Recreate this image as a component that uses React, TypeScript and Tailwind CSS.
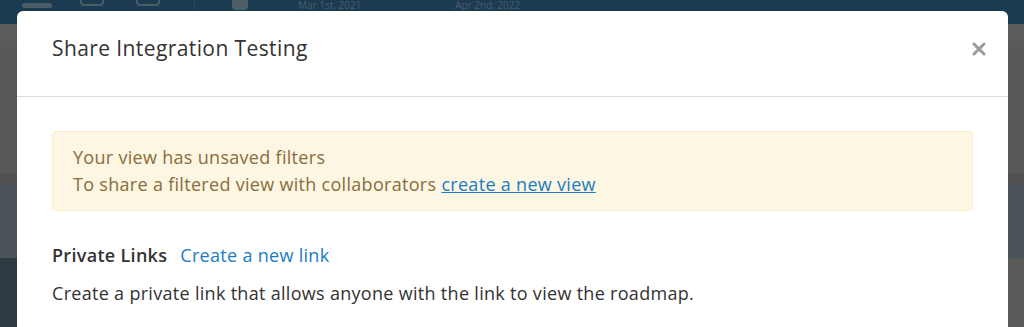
import { FC } from "react";

const font = { fontFamily: "'Open Sans', 'Noto Sans', sans-serif" };

const Backdrop: FC = () => (
  <div className="absolute inset-0 flex flex-col">
    <div className="relative h-[24px] bg-[#1b3b51] overflow-hidden">
      <div className="absolute left-[22px] top-[3px] h-[5px] w-[30px] rounded-sm bg-[#4d5d68]" />
      <div className="absolute left-[80px] -top-[6px] h-[12px] w-[24px] rounded-sm border-2 border-[#4d5d68]" />
      <div className="absolute left-[136px] -top-[6px] h-[12px] w-[24px] rounded-sm border-2 border-[#4d5d68]" />
      <div className="absolute left-[194px] top-0 h-[24px] w-px bg-[#2c4b60]" />
      <div className="absolute left-[232px] -top-[4px] h-[14px] w-[16px] rounded-sm bg-[#4d5d68]" />
      <span className="absolute left-[298px] top-0 text-[10px] leading-[10px] text-[#4d5d68]">
        Mar 1st, 2021
      </span>
      <span className="absolute left-[455px] top-0 text-[10px] leading-[10px] text-[#4d5d68]">
        Apr 2nd, 2022
      </span>
    </div>
    <div className="h-[23px] bg-[#5b5b5b]" />
    <div className="h-[126px] bg-[#575757]" />
    <div className="h-[10px] bg-[#515151]" />
    <div className="h-[75px] bg-[#4b5458]" />
    <div className="flex flex-1">
      <div className="w-[17px] bg-[#2f3b43]" />
      <div className="flex-1 bg-[#5a5a5a]" />
    </div>
  </div>
);

const App: FC = () => {
  return (
    <div className="relative h-[327px] w-full overflow-hidden" style={font}>
      <Backdrop />
      <div className="absolute left-[17px] top-[11px] w-[991px] h-[330px] rounded-t-[6px] bg-white">
        <div className="flex h-[86px] items-center justify-between border-b border-[#dcdcdc] pb-[10px] pl-[35px] pr-[22px]">
          <h2 className="text-[21px] font-medium text-[#333333] tracking-[0.4px]">
            Share Integration Testing
          </h2>
          <button className="text-[#9a9a9a]" type="button">
            <svg width="14" height="14" viewBox="0 0 14 14">
              <path
                d="M2 2L12 12M12 2L2 12"
                stroke="currentColor"
                strokeWidth="3"
                strokeLinecap="round"
              />
            </svg>
          </button>
        </div>
        <div className="px-[35px] pt-[34px] text-[18px] tracking-[0.3px]">
          <div className="rounded-[4px] border border-[#faebcc] bg-[#fcf6e3] px-[20px] py-[12px] leading-[27px] text-[#8a6d3b]">
            <p>Your view has unsaved filters</p>
            <p>
              To share a filtered view with collaborators{" "}
              <a href="#" className="text-[#1a7cc4] underline">
                create a new view
              </a>
            </p>
          </div>
          <div className="mt-[31px] flex items-center gap-[13px] leading-[26px]">
            <span className="font-semibold text-[#333333]">Private Links</span>
            <a href="#" className="text-[#1a7cc4]">
              Create a new link
            </a>
          </div>
          <p className="mt-[12px] leading-[26px] text-[#333333]">
            Create a private link that allows anyone with the link to view the
            roadmap.
          </p>
        </div>
      </div>
    </div>
  );
};

export default App;
